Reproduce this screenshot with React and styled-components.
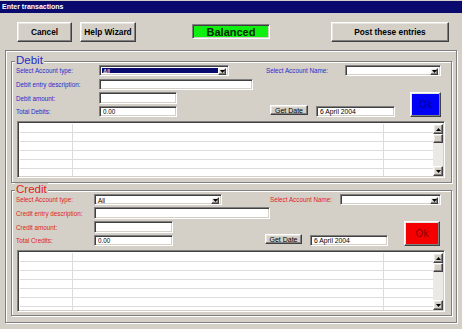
import React from 'react';
import styled, { createGlobalStyle } from 'styled-components';

const Global = createGlobalStyle`
  html, body { margin: 0; padding: 0; background: #d4d0c8; }
  body { font-family: "Liberation Sans", Arial, sans-serif; }
  * { box-sizing: border-box; }
`;

const Window = styled.div`
  width: 462px;
  height: 329px;
  display: flex;
  flex-direction: column;
  background: #d4d0c8;
  overflow: hidden;
`;

const TitleBar = styled.div`
  margin-top: 1px;
  height: 12px;
  background: #0a0a6e;
  color: #fff;
  font-weight: bold;
  font-size: 7px;
  line-height: 12px;
  padding-left: 2px;
`;

const Toolbar = styled.div`
  height: 37px;
  display: flex;
  align-items: center;
  padding-left: 17px;
`;

const raised = `
  border: 1px solid;
  border-color: #ffffff #404040 #404040 #ffffff;
  box-shadow: inset -1px -1px 0 #808080, inset 1px 1px 0 #e8e6e0;
`;

const sunken = `
  border: 1px solid;
  border-color: #808080 #ffffff #ffffff #808080;
  box-shadow: inset 1px 1px 0 #404040, inset -1px -1px 0 #d4d0c8;
`;

const ToolButton = styled.div`
  ${raised}
  width: ${p => p.$w}px;
  margin-left: ${p => p.$ml || 0}px;
  height: 20px;
  background: #d4d0c8;
  display: flex;
  align-items: center;
  justify-content: center;
  font-weight: bold;
  font-size: 8.3px;
  color: #000;
`;

const Status = styled.div`
  ${sunken}
  width: 78px;
  height: 15px;
  margin-left: ${p => p.$ml}px;
  background: #10f010;
  display: flex;
  align-items: center;
  justify-content: center;
  font-weight: bold;
  font-size: 11px;
  color: #062a06;
`;

const Panel = styled.div`
  margin: 0 5px;
  height: 273px;
  border: 1px solid #808080;
  box-shadow: inset 1px 1px 0 #fff, 1px 1px 0 #fff;
  display: flex;
  flex-direction: column;
  padding: 0 4px 0 5px;
`;

const Group = styled.div`
  position: relative;
  margin-top: ${p => p.$mt}px;
  border: 1px solid #808080;
  box-shadow: inset 1px 1px 0 #fff, 1px 1px 0 #fff;
  padding: 3px 6px ${p => p.$pb}px 4px;
  display: flex;
  flex-direction: column;
`;

const Legend = styled.span`
  position: absolute;
  top: -8px;
  left: 3px;
  padding: 0 1px;
  background: #d4d0c8;
  font-size: 11.5px;
  line-height: 13px;
  color: ${p => p.$color};
`;

const Row = styled.div`
  display: flex;
  align-items: center;
  height: ${p => p.$h || 11}px;
  margin-top: ${p => p.$mt || 0}px;
`;

const Label = styled.span`
  width: ${p => p.$w}px;
  margin-left: ${p => p.$ml || 0}px;
  flex: none;
  font-size: 6.3px;
  white-space: nowrap;
  color: ${p => p.$color};
`;

const Field = styled.div`
  ${sunken}
  width: ${p => p.$w}px;
  height: ${p => p.$h || 11}px;
  margin-left: ${p => p.$ml || 0}px;
  flex: none;
  background: #fff;
  font-size: ${p => p.$fs || 6.3}px;
  color: #000;
  padding-left: 3px;
  display: flex;
  align-items: center;
  white-space: nowrap;
`;

const SelectBox = styled.div`
  ${sunken}
  width: ${p => p.$w}px;
  height: 11px;
  margin-left: ${p => p.$ml || 0}px;
  flex: none;
  background: #fff;
  display: flex;
  padding: 2px;
`;

const SelectValue = styled.div`
  flex: 1;
  background: ${p => (p.$focus ? '#0a0a6e' : '#fff')};
  color: ${p => (p.$focus ? '#fff' : '#000')};
  font-size: 6.3px;
  line-height: 7px;
  padding-left: 1px;
`;

const ArrowBtn = styled.div`
  ${raised}
  width: ${p => p.$w || 8}px;
  height: ${p => p.$h || 7}px;
  flex: none;
  background: #d4d0c8;
  display: flex;
  align-items: center;
  justify-content: center;
`;

const Block = styled.div`
  display: flex;
  align-items: flex-end;
  margin-top: ${p => p.$mt}px;
  height: 25px;
`;

const LeftFields = styled.div`
  display: flex;
  flex-direction: column;
  gap: 2px;
`;

const SmallButton = styled.div`
  ${raised}
  width: ${p => p.$w}px;
  height: 10px;
  margin-left: ${p => p.$ml}px;
  margin-bottom: 2px;
  flex: none;
  background: #d4d0c8;
  font-size: 7px;
  display: flex;
  align-items: center;
  justify-content: center;
  color: #000;
`;

const OkButton = styled.div`
  ${raised}
  width: ${p => p.$w}px;
  height: 25px;
  margin-left: ${p => p.$ml}px;
  flex: none;
  align-self: stretch;
  background: ${p => p.$bg};
  color: ${p => p.$fg};
  font-size: 10px;
  display: flex;
  align-items: center;
  justify-content: center;
`;

const Grid = styled.div`
  ${sunken}
  margin-top: 4px;
  margin-left: 1px;
  width: 428px;
  height: ${p => p.$h}px;
  background: #fff;
  display: flex;
  padding: 2px 1px 1px 2px;
`;

const Cells = styled.div`
  flex: 1;
  overflow: hidden;
  display: flex;
  flex-direction: column;
`;

const GridRow = styled.div`
  display: flex;
  height: ${p => p.$h}px;
  flex: none;
  border-bottom: 1px solid #dcdcdc;
`;

const Cell = styled.div`
  width: ${p => p.$w}px;
  flex: ${p => (p.$w ? 'none' : 1)};
  border-right: ${p => (p.$last ? 'none' : '1px solid #dcdcdc')};
`;

const Scrollbar = styled.div`
  width: 10px;
  flex: none;
  display: flex;
  flex-direction: column;
  background: #ebe9e4;
`;

const Thumb = styled.div`
  ${raised}
  height: 9px;
  background: #d4d0c8;
`;

const Track = styled.div`
  flex: 1;
`;

const Down = () => (
  <svg width="5" height="3" viewBox="0 0 5 3"><path d="M0 0h5L2.5 3z" fill="#000" /></svg>
);
const Up = () => (
  <svg width="5" height="3" viewBox="0 0 5 3"><path d="M0 3h5L2.5 0z" fill="#000" /></svg>
);

const Select = ({ w, ml, value, focus }) => (
  <SelectBox $w={w} $ml={ml}>
    <SelectValue $focus={focus}>{value}</SelectValue>
    <ArrowBtn><Down /></ArrowBtn>
  </SelectBox>
);

const DataGrid = ({ h, rows, rowH }) => (
  <Grid $h={h}>
    <Cells>
      {Array.from({ length: rows }).map((_, i) => (
        <GridRow key={i} $h={rowH}>
          <Cell $w={53} />
          <Cell $w={311} />
          <Cell $last />
        </GridRow>
      ))}
    </Cells>
    <Scrollbar>
      <ArrowBtn $w={10} $h={10}><Up /></ArrowBtn>
      <Thumb />
      <Track />
      <ArrowBtn $w={10} $h={10}><Down /></ArrowBtn>
    </Scrollbar>
  </Grid>
);

const Section = ({ c }) => (
  <Group $mt={c.mt} $pb={c.pb}>
    <Legend $color={c.color}>{c.title}</Legend>
    <Row>
      <Label $w={c.labelW} $color={c.color}>Select Account type:</Label>
      <Select w={c.typeW} value="All" focus={c.focus} />
      <Label $w={c.nameLabelW} $ml={c.nameLabelMl} $color={c.color}>Select Account Name:</Label>
      <Select w={c.nameW} value="" />
    </Row>
    <Row $mt={c.r2mt} $h={c.descH}>
      <Label $w={c.labelW} $color={c.color}>{c.descLabel}</Label>
      <Field $w={c.descW} $h={c.descH} />
    </Row>
    <Block $mt={c.bmt}>
      <LeftFields>
        <Row $h={12}>
          <Label $w={c.labelW} $color={c.color}>{c.amountLabel}</Label>
          <Field $w={c.amtW} $h={12} />
        </Row>
        <Row $h={11}>
          <Label $w={c.labelW} $color={c.color}>{c.totalLabel}</Label>
          <Field $w={c.amtW} $h={11}>0.00</Field>
        </Row>
      </LeftFields>
      <SmallButton $w={c.getW} $ml={c.getMl}>Get Date</SmallButton>
      <Field $w={c.dateW} $ml={8} $h={11} $fs={6.8}>6 April 2004</Field>
      <OkButton $w={c.okW} $ml={c.okMl} $bg={c.okBg} $fg={c.okFg}>Ok</OkButton>
    </Block>
    <DataGrid h={c.gridH} rows={c.rows} rowH={c.rowH} />
  </Group>
);

const debit = {
  title: 'Debit', color: '#2a2ac8', mt: 10, pb: 4, focus: true,
  labelW: 83, typeW: 130, nameLabelW: 79, nameLabelMl: 37, nameW: 96,
  r2mt: 3, descH: 11, descLabel: 'Debit entry description:', descW: 154,
  bmt: 2, amountLabel: 'Debit amount:', totalLabel: 'Total Debits:', amtW: 78,
  getW: 38, getMl: 93, dateW: 79, okW: 31, okMl: 15, okBg: '#0000f4', okFg: '#00008a',
  gridH: 57, rows: 6, rowH: 9,
};

const credit = {
  title: 'Credit', color: '#e01c1c', mt: 7, pb: 3, focus: false,
  labelW: 78, typeW: 128, nameLabelW: 70, nameLabelMl: 48, nameW: 101,
  r2mt: 2, descH: 12, descLabel: 'Credit entry description:', descW: 176,
  bmt: 2, amountLabel: 'Credit amount:', totalLabel: 'Total Credits:', amtW: 79,
  getW: 37, getMl: 92, dateW: 78, okW: 36, okMl: 16, okBg: '#f40000', okFg: '#8a0000',
  gridH: 62, rows: 7, rowH: 9,
};

export default function App() {
  return (
    <Window>
      <Global />
      <TitleBar>Enter transactions</TitleBar>
      <Toolbar>
        <ToolButton $w={55}>Cancel</ToolButton>
        <ToolButton $w={56} $ml={8}>Help Wizard</ToolButton>
        <Status $ml={56}>Balanced</Status>
        <ToolButton $w={118} $ml={61}>Post these entries</ToolButton>
      </Toolbar>
      <Panel>
        <Section c={debit} />
        <Section c={credit} />
      </Panel>
    </Window>
  );
}
